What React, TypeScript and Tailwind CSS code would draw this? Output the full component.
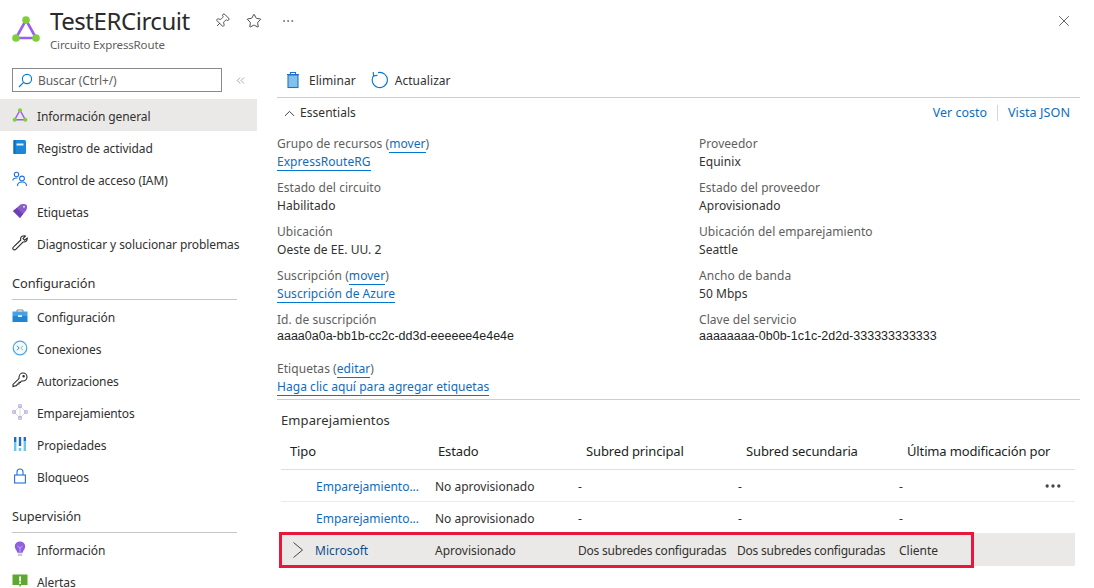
import { Pin, Star, X, ChevronUp, ChevronsLeft, Ellipsis } from "lucide-react";
import type { ReactNode } from "react";

function CircuitIcon({ size }: { size: number }) {
  return (
    <svg width={size} height={size} viewBox="0 0 30 30" className="shrink-0">
      <path d="M15 6 L25 24 L5 24 Z" fill="none" stroke="#9b5ff0" strokeWidth="2.6" />
      <circle cx="15" cy="6" r="3.8" fill="#7fce3c" />
      <circle cx="5" cy="24" r="3.8" fill="#7fce3c" />
      <circle cx="25" cy="24" r="3.8" fill="#7fce3c" />
    </svg>
  );
}

const icons: Record<string, ReactNode> = {
  overview: <CircuitIcon size={16} />,
  log: (
    <svg width="16" height="16" viewBox="0 0 16 16">
      <rect x="1.5" y="1" width="12.5" height="14" rx="1.5" fill="#1b87d6" />
      <rect x="4.5" y="4.5" width="7" height="2" fill="#dff0fb" />
      <rect x="1.5" y="1" width="2" height="14" fill="#0f6cb5" />
    </svg>
  ),
  iam: (
    <svg width="16" height="16" viewBox="0 0 16 16" fill="none" stroke="#2272d9" strokeWidth="1.1">
      <circle cx="4.5" cy="3.5" r="2.2" />
      <path d="M0.8 9.5 C1 7.2 3 6.8 5.5 7" />
      <circle cx="10" cy="7.5" r="2.4" />
      <path d="M5.5 15 C5.5 11.8 7.5 11 10 11 C12.5 11 14.5 11.8 14.5 15" />
    </svg>
  ),
  tag: (
    <svg width="16" height="16" viewBox="0 0 16 16">
      <path d="M1 8 L8.5 1.5 C9.5 .8 11 .8 12 1 L14 1.5 C15 2 15 3 15 4.5 L14.5 7 L8 15 Z" fill="#8a5cc9" />
      <path d="M1 8 L5 5 L11 11 L8 15 Z" fill="#6e3fb3" />
      <circle cx="12" cy="3.8" r="1" fill="#e6dcf5" />
    </svg>
  ),
  wrench: (
    <svg width="16" height="16" viewBox="0 0 16 16" fill="none" stroke="#2b2b2b" strokeWidth="1.1">
      <path d="M10 1.2 C12 .6 13.4 1 13.4 1 L11 3.6 L12.6 5.2 L15.2 3 C15.4 5.5 14 7.4 11 7 L4 14.2 C3 15.2 1.8 15 1.2 14.4 C.6 13.6 .7 12.6 1.6 11.8 L8.8 5 C8.4 3.4 8.8 1.8 10 1.2 Z" />
    </svg>
  ),
  config: (
    <svg width="16" height="16" viewBox="0 0 16 16">
      <path d="M5 4 V2 H11 V4" fill="none" stroke="#7a8a99" strokeWidth="1" />
      <rect x="0.5" y="3.5" width="15" height="4.5" fill="#45a0e6" />
      <rect x="0.5" y="8" width="15" height="6" fill="#1b87d6" />
      <rect x="6" y="7.2" width="4" height="1.8" fill="#e8f3fb" />
    </svg>
  ),
  conn: (
    <svg width="16" height="16" viewBox="0 0 16 16" fill="none">
      <circle cx="8" cy="8" r="6.8" stroke="#4aa3e8" strokeWidth="1.2" fill="#f2f9fe" />
      <path d="M5 5.8 L7.2 8 L5 10.2" stroke="#2272d9" strokeWidth="0.9" />
      <path d="M11 5.8 L8.8 8 L11 10.2" stroke="#7fce3c" strokeWidth="0.9" />
    </svg>
  ),
  key: (
    <svg width="16" height="16" viewBox="0 0 16 16" fill="none" stroke="#2b2b2b" strokeWidth="1.1">
      <path d="M7 5.6 C7 2.8 8.8 1 11 1 C13.2 1 15 2.8 15 5 C15 7.2 13.2 9 10.8 9 L9.4 9 L8.4 10.4 L7 10.4 L7 12 L5.4 12 L4.6 13.6 L1 14.6 L1 12.4 L7 6.6 Z" />
      <circle cx="11.6" cy="4.2" r="0.7" />
    </svg>
  ),
  peer: (
    <svg width="16" height="16" viewBox="0 0 16 16" fill="none" stroke="#a98be0" strokeWidth="0.8">
      <path d="M8 2 L14 8 L8 14 L2 8 Z M8 2 V14" stroke="#cfd3d8" />
      <rect x="6.8" y="0.8" width="2.4" height="2.4" />
      <rect x="6.8" y="12.8" width="2.4" height="2.4" />
      <rect x="0.8" y="6.8" width="2.4" height="2.4" />
      <rect x="12.8" y="6.8" width="2.4" height="2.4" />
    </svg>
  ),
  props: (
    <svg width="16" height="16" viewBox="0 0 16 16">
      <rect x="2" y="1" width="2.4" height="5" fill="#1b6fc2" />
      <rect x="2" y="6" width="2.4" height="9" fill="#6cc4f0" />
      <rect x="6.8" y="1" width="2.4" height="9" fill="#1b6fc2" />
      <rect x="6.8" y="12" width="2.4" height="3" fill="#6cc4f0" />
      <rect x="11.6" y="1" width="2.4" height="4" fill="#1b6fc2" />
      <rect x="11.6" y="5" width="2.4" height="10" fill="#6cc4f0" />
    </svg>
  ),
  lock: (
    <svg width="16" height="16" viewBox="0 0 16 16" fill="none" stroke="#2272d9" strokeWidth="1.1">
      <rect x="2.6" y="7" width="10.8" height="8" />
      <path d="M5 7 V4 C5 2 6.3 1 8 1 C9.7 1 11 2 11 4 V7" />
    </svg>
  ),
  bulb: (
    <svg width="16" height="16" viewBox="0 0 16 16">
      <path d="M8 .5 C11.2 .5 13.2 2.8 13.2 5.4 C13.2 8 11 9.4 10.6 11.8 H5.4 C5 9.4 2.8 8 2.8 5.4 C2.8 2.8 4.8 .5 8 .5 Z" fill="#8f5fe0" />
      <rect x="5.8" y="12.4" width="4.4" height="2.6" fill="#c9ccd1" />
      <path d="M5.5 5 L8 7 L10.5 5 M8 7 V11" stroke="#d9c9f5" strokeWidth="0.7" fill="none" />
    </svg>
  ),
  alert: (
    <svg width="16" height="16" viewBox="0 0 16 16">
      <path d="M.5 1.5 H15.5 V12 H9.5 L7.5 14.5 V12 H.5 Z" fill="#5fa82e" />
      <rect x="7.2" y="3.4" width="1.8" height="5" fill="#fff" />
      <rect x="7.2" y="9.2" width="1.8" height="1.7" fill="#fff" />
    </svg>
  ),
};

function NavItem({ icon, label, active }: { icon: string; label: string; active?: boolean }) {
  return (
    <div className={`flex h-8 items-center gap-[9px] pl-3 text-[#323130] ${active ? "bg-[#ebe9e7]" : ""}`}>
      <span className="flex w-4 shrink-0 justify-center">{icons[icon]}</span>
      <span className="mt-1 whitespace-nowrap">{label}</span>
    </div>
  );
}

function NavSection({ title }: { title: string }) {
  return (
    <div className="mt-2 pr-5 pl-3">
      <div className="flex h-[33px] items-center border-b border-[#c8c6c4] pt-[2px] text-[12.8px] text-[#323130]">{title}</div>
    </div>
  );
}

function Field({ label, children, mono, last }: { label: ReactNode; children: ReactNode; mono?: boolean; last?: boolean }) {
  return (
    <div className={last ? "h-[39px]" : "h-11"}>
      <div className="h-[18px] leading-[18px] text-[#605e5c]">{label}</div>
      <div
        className={
          mono
            ? "h-[14px] font-['Liberation_Sans'] text-[12.5px] leading-[14px] tracking-normal text-[#1f1f1f]"
            : "h-[18px] leading-[18px] text-[#323130]"
        }
      >
        {children}
      </div>
    </div>
  );
}

function A({ children }: { children: ReactNode }) {
  return <a className="border-b border-[#0078d4] leading-[15px] text-[#0f6cbd]">{children}</a>;
}

const cols = "grid grid-cols-[154px_143px_160px_161px_1fr] items-center";

function PeerRow({ more }: { more?: boolean }) {
  return (
    <div className={`${cols} h-8 border-b border-[#edebe9] pt-[2px]`}>
      <span className="pl-[35px] whitespace-nowrap text-[#0f6cbd]">Emparejamiento...</span>
      <span className="whitespace-nowrap text-[#323130]">No aprovisionado</span>
      <span className="text-[#323130]">-</span>
      <span className="text-[#323130]">-</span>
      <span className="flex items-center justify-between pr-3 text-[#323130]">
        -{more && <Ellipsis size={20} strokeWidth={2} className="-mt-[2px] text-[#484644]" />}
      </span>
    </div>
  );
}

export default function App() {
  return (
    <div className="flex h-[588px] w-[1094px] flex-col overflow-hidden bg-white font-['Noto_Sans',sans-serif] text-[12px] tracking-[-0.1px]">
      <header className="flex h-[59px] shrink-0 items-start pt-[5px] pl-[11px]">
        <div className="mt-[9px] mr-[9px]">
          <CircuitIcon size={30} />
        </div>
        <div className="w-[164px]">
          <div className="h-[32px] text-[24px] leading-[32px] tracking-[-0.45px] text-[#2b2a29]">TestERCircuit</div>
          <div className="text-[11.5px] leading-[15px] tracking-[-0.15px] text-[#605e5c]">Circuito ExpressRoute</div>
        </div>
        <div className="mt-[8px] flex items-center gap-4 text-[#323130]">
          <Pin size={16} strokeWidth={1.2} className="rotate-45" />
          <Star size={16} strokeWidth={1.3} />
          <Ellipsis size={14} strokeWidth={1.2} className="ml-[3px] text-[#605e5c]" />
        </div>
        <X size={18} strokeWidth={1} className="mt-[7px] mr-[21px] ml-auto text-[#323130]" />
      </header>

      <div className="flex min-h-0 flex-1">
        <aside className="w-[257px] shrink-0">
          <div className="flex h-10 items-center pr-[7px] pl-3">
            <div className="mt-[2px] flex h-6 w-[210px] items-center gap-[5px] border border-[#8a8886] pl-[5px] text-[#605e5c]">
              <svg width="15" height="15" viewBox="0 0 15 15" fill="none" stroke="#0078d4" strokeWidth="1.1">
                <circle cx="9" cy="6" r="4.6" />
                <path d="M5.6 9.4 L1 14" />
              </svg>
              <span className="mt-[1px]">Buscar (Ctrl+/)</span>
            </div>
            <ChevronsLeft size={13} strokeWidth={1} className="mt-[2px] mr-[3px] ml-auto text-[#605e5c]" />
          </div>
          <NavItem icon="overview" label="Información general" active />
          <NavItem icon="log" label="Registro de actividad" />
          <NavItem icon="iam" label="Control de acceso (IAM)" />
          <NavItem icon="tag" label="Etiquetas" />
          <NavItem icon="wrench" label="Diagnosticar y solucionar problemas" />
          <NavSection title="Configuración" />
          <NavItem icon="config" label="Configuración" />
          <NavItem icon="conn" label="Conexiones" />
          <NavItem icon="key" label="Autorizaciones" />
          <NavItem icon="peer" label="Emparejamientos" />
          <NavItem icon="props" label="Propiedades" />
          <NavItem icon="lock" label="Bloqueos" />
          <NavSection title="Supervisión" />
          <NavItem icon="bulb" label="Información" />
          <NavItem icon="alert" label="Alertas" />
        </aside>

        <main className="ml-5 w-[803px] shrink-0 tracking-[0.05px]">
          <div className="flex h-[39px] items-center gap-[15px] border-b border-[#d0cecc] pt-[6px] pl-[9px] text-[#323130]">
            <span className="flex items-center gap-[9px]">
              <svg width="14" height="18" viewBox="0 0 14 18" className="-mt-[2px]">
                <path d="M1 3.5 H13 M4.5 3.5 V1.5 H9.5 V3.5" stroke="#2272c9" strokeWidth="1.1" fill="none" />
                <rect x="2" y="4" width="10" height="12.5" fill="#83c1ed" stroke="#2272c9" strokeWidth="1.1" />
              </svg>
              Eliminar
            </span>
            <span className="flex items-center gap-[6px]">
              <svg width="18" height="18" viewBox="0 0 18 18" fill="none" stroke="#0078d4" strokeWidth="1.1" className="-mt-[2px]">
                <path d="M7 1.6 A7.6 7.6 0 1 1 2.6 4.6" />
                <path d="M2.2 1 L2.6 4.8 L6.4 4.4" />
              </svg>
              Actualizar
            </span>
          </div>

          <div className="flex h-[30px] items-center pr-[10px] pl-[4px]">
            <ChevronUp size={17} strokeWidth={1.3} className="text-[#323130]" />
            <span className="ml-[2px] text-[#323130]">Essentials</span>
            <span className="ml-auto text-[12.4px] text-[#0f6cbd]">Ver costo</span>
            <span className="mx-[10px] h-4 w-px bg-[#d8d6d4]" />
            <span className="text-[12.6px] text-[#0f6cbd]">Vista JSON</span>
          </div>

          <div className="mt-[7px] grid grid-cols-[422px_1fr] border-b border-[#d0cecc]">
            <div>
              <Field label={<>Grupo de recursos (<A>mover</A>)</>}><A>ExpressRouteRG</A></Field>
              <Field label="Estado del circuito">Habilitado</Field>
              <Field label="Ubicación">Oeste de EE. UU. 2</Field>
              <Field label={<>Suscripción (<A>mover</A>)</>}><A>Suscripción de Azure</A></Field>
              <Field label="Id. de suscripción" mono>aaaa0a0a-bb1b-cc2c-dd3d-eeeeee4e4e4e</Field>
            </div>
            <div>
              <Field label="Proveedor">Equinix</Field>
              <Field label="Estado del proveedor">Aprovisionado</Field>
              <Field label="Ubicación del emparejamiento">Seattle</Field>
              <Field label="Ancho de banda">50 Mbps</Field>
              <Field label="Clave del servicio" mono>aaaaaaaa-0b0b-1c1c-2d2d-333333333333</Field>
            </div>
            <div className="col-span-2 mt-[5px]">
              <Field label={<>Etiquetas (<A>editar</A>)</>} last><A>Haga clic aquí para agregar etiquetas</A></Field>
            </div>
          </div>

          <div className="flex h-10 items-center pt-[2px] pl-1 text-[13px] tracking-[0.1px] text-[#323130]">Emparejamientos</div>

          <div className="relative ml-1 w-[794px] tracking-normal">
            <div className={`${cols} h-[30px] border-b border-[#e1dfdd] pb-[6px] text-[13px] tracking-[-0.14px] text-[#201f1e]`}>
              <span className="pl-[9px]">Tipo</span>
              <span className="pl-[3px]">Estado</span>
              <span className="pl-2">Subred principal</span>
              <span className="pl-2">Subred secundaria</span>
              <span className="pl-2 whitespace-nowrap">Última modificación por</span>
            </div>
            <PeerRow more />
            <PeerRow />
            <div className={`${cols} h-8 bg-[#ebe9e7] text-[#323130]`}>
              <span className="flex items-center gap-[12px] pl-[12px]">
                <svg width="10" height="16" viewBox="0 0 10 16" fill="none" stroke="#323130" strokeWidth="0.9">
                  <path d="M0.5 0.5 L9.5 8 L0.5 15.5" />
                </svg>
                <span className="mt-[2px] text-[#0b4f8a]">Microsoft</span>
              </span>
              <span className="mt-[2px]">Aprovisionado</span>
              <span className="mt-[2px] whitespace-nowrap tracking-[-0.22px]">Dos subredes configuradas</span>
              <span className="mt-[2px] -ml-[1px] whitespace-nowrap tracking-[-0.22px]">Dos subredes configuradas</span>
              <span className="mt-[2px]">Cliente</span>
            </div>
            <div className="absolute top-[92px] -left-[2px] h-9 w-[695px] border-[3px] border-[#e8173c]" />
          </div>
        </main>
      </div>
    </div>
  );
}
